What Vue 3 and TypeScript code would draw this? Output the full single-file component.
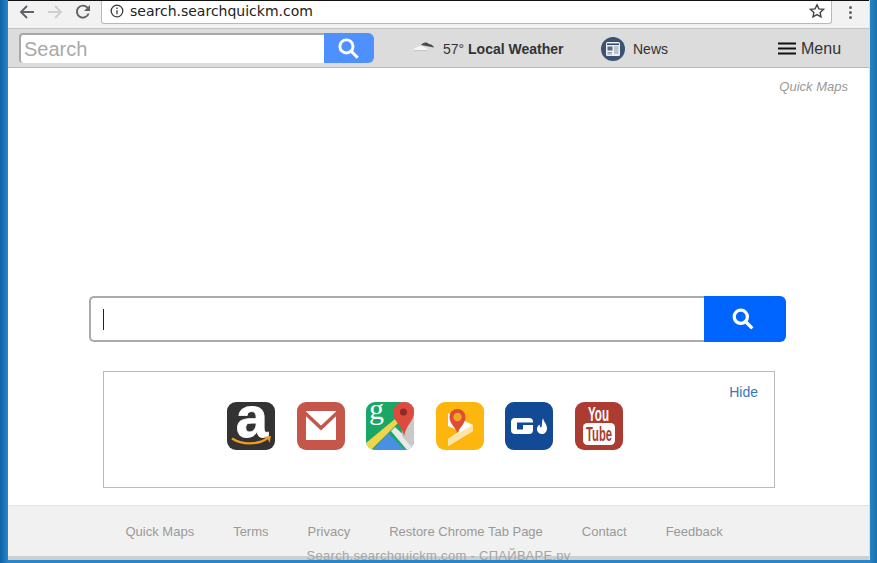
<script setup lang="ts">
const footerLinks = [
  "Quick Maps",
  "Terms",
  "Privacy",
  "Restore Chrome Tab Page",
  "Contact",
  "Feedback",
];
</script>

<template>
  <div class="desktop">
    <div class="window">
      <div class="chrome-bar">
        <svg class="nav back" viewBox="0 0 16 16">
          <path d="M15 8H2.5M8 2L2 8l6 6" />
        </svg>
        <svg class="nav forward" viewBox="0 0 16 16">
          <path d="M1 8h12.5M8 2l6 6-6 6" />
        </svg>
        <svg class="nav reload" viewBox="0 0 16 16">
          <path d="M13.6 9.5A6 6 0 1 1 12.4 3.6L14 5.2" />
          <path class="solid" d="M15 1v6H9z" />
        </svg>
        <div class="address">
          <svg class="info" viewBox="0 0 14 14">
            <circle cx="7" cy="7" r="5.8" />
            <path d="M7 6.2v4M7 3.6v1.5" />
          </svg>
          <span class="url">search.searchquickm.com</span>
          <svg class="star" viewBox="0 0 16 16">
            <path d="M8 1.8l1.9 4.1 4.5.5-3.3 3 .9 4.4L8 11.6l-4 2.2.9-4.4-3.3-3 4.5-.5z" />
          </svg>
        </div>
        <div class="kebab"><i></i><i></i><i></i></div>
      </div>

      <div class="top-bar">
        <div class="top-search">
          <input class="top-input" type="text" placeholder="Search" />
          <button class="top-button">
            <svg viewBox="0 0 20 20"><circle cx="8.2" cy="8.2" r="5.7" /><path d="M12.5 12.5L18 18" /></svg>
          </button>
        </div>
        <svg class="cloud" viewBox="0 0 22 12">
          <path fill="#4a4a4a" d="M8 4c2-3 6-3.500 8-1 2 0 4 1.500 5 3.500z" />
          <path fill="#f6f6f6" d="M1 9c0-2 2-3 4-3 2-1.500 5-1 6.500.5 2 0 3 1 3 2.500z" />
          <path fill="#c9c9c9" d="M1 9h14c-.5 1-1.500 1.200-2.500 1.200h-9C2 10.200 1 10 1 9z" />
        </svg>
        <span class="weather">57° <b>Local Weather</b></span>
        <svg class="news-icon" viewBox="0 0 24 24">
          <circle cx="12" cy="12" r="12" fill="#3b5273" />
          <rect x="5" y="5" width="14" height="14" rx="1.500" fill="#eef0f3" />
          <rect x="6" y="6.500" width="12" height="1.500" fill="#33455f" />
          <rect x="6.500" y="9.500" width="5" height="4" fill="#5a6a80" />
          <path stroke="#8a95a5" stroke-width="1" d="M13 10h4.500M13 12h4.500M13 14h4.500M6.500 15.500h4.500M6.500 17h4.500M13 16h4.500" />
        </svg>
        <span class="news">News</span>
        <svg class="burger" viewBox="0 0 18 13">
          <path d="M0 1.500h18M0 6.500h18M0 11.500h18" />
        </svg>
        <span class="menu">Menu</span>
      </div>

      <main class="content">
        <a class="quick-maps">Quick Maps</a>

        <div class="main-search">
          <div class="main-input"><span class="caret"></span></div>
          <button class="main-button">
            <svg viewBox="0 0 20 20"><circle cx="8" cy="8" r="6" /><path d="M12.500 12.500L18.500 18.500" /></svg>
          </button>
        </div>

        <section class="apps">
          <a class="hide">Hide</a>
          <div class="app-row">
            <svg class="app" viewBox="0 0 48 48">
              <rect width="48" height="48" rx="9" fill="#333" />
              <text class="amazon-a" x="25" y="35">a</text>
              <path fill="none" stroke="#f29a1f" stroke-width="2.400" d="M5 36.500c10 6.500 26 6.500 35 0" />
              <path fill="#f29a1f" d="M36 35l8-1-1.500 7-1.500-3.500z" />
            </svg>
            <svg class="app" viewBox="0 0 48 48">
              <rect width="48" height="48" rx="9" fill="#c5574a" />
              <rect x="9" y="9" width="30" height="29" fill="#fff" />
              <path fill="none" stroke="#c5574a" stroke-width="3.500" d="M7 10l17 16 17-16" />
            </svg>
            <svg class="app" viewBox="0 0 48 48">
              <defs>
                <clipPath id="maps-clip"><rect width="48" height="48" rx="9" /></clipPath>
              </defs>
              <g clip-path="url(#maps-clip)">
                <rect width="48" height="48" fill="#18a765" />
                <path fill="#4a90e2" d="M7 48l15-17 17 17z" />
                <path fill="#f3d34a" d="M0 41L29 17l3 4L5 48H0z" />
                <path fill="#e9e9e9" d="M25 29l4-4 19 18v5h-7z" />
                <path fill="#c9c9c9" d="M35 0h13v48L36 34z" />
                <path fill="#dc4b3e" d="M38 0c-7 0-11 5-11 11 0 7 8 11 11 23 3-12 10-16 10-23V0z" />
                <circle cx="37.500" cy="10" r="3.600" fill="#8e2a25" />
                <text class="maps-g" x="3" y="17">g</text>
              </g>
            </svg>
            <svg class="app" viewBox="0 0 48 48">
              <rect width="48" height="48" rx="9" fill="#fdb60d" />
              <path fill="#fff" d="M12 11l25 12v6L12 44v-7l12-8-12-5z" />
              <path fill="#fde3a6" d="M12 37l25-14v6L12 44z" />
              <path fill="#dd4b39" d="M21.500 31c-2-6-8-9-8-16a8 8 0 0 1 16 0c0 7-6 10-8 16z" />
              <circle cx="21.500" cy="15" r="4.200" fill="#f6a61e" />
            </svg>
            <svg class="app" viewBox="0 0 48 48">
              <rect width="48" height="48" rx="9" fill="#134a95" />
              <rect x="6" y="16" width="22" height="16" rx="4" fill="#fff" />
              <rect x="12" y="20.500" width="16" height="2.500" fill="#134a95" />
              <rect x="12" y="23" width="6" height="4.500" fill="#134a95" />
              <path fill="#fff" d="M38 16c.5 3.500 4 6 4 10.500 0 3.500-2.500 5.500-5 5.500-3 0-5-2.200-5-5 0-2.200 1.300-3.800 2.800-4.500-.2 1.500.3 2.800 1.400 3.300C37.500 23 36.500 19 38 16z" />
            </svg>
            <svg class="app" viewBox="0 0 48 48">
              <rect width="48" height="48" rx="9" fill="#ac3c31" />
              <rect x="8" y="21" width="32" height="22" rx="4.500" fill="#fff" />
              <text class="yt-you" x="13" y="19" textLength="21" lengthAdjust="spacingAndGlyphs">You</text>
              <text class="yt-tube" x="11" y="39" textLength="26" lengthAdjust="spacingAndGlyphs">Tube</text>
            </svg>
          </div>
        </section>
      </main>

      <footer class="footer">
        <nav class="footer-links">
          <a v-for="link in footerLinks" :key="link">{{ link }}</a>
        </nav>
        <div class="watermark">Search.searchquickm.com - СПАЙВАРЕ.ру</div>
      </footer>
    </div>
  </div>
</template>

<style>
html,
body {
  margin: 0;
  overflow: hidden;
}
</style>

<style scoped>
.desktop {
  width: 877px;
  height: 563px;
  padding-right: 8px;
  padding-left: 8px;
  box-sizing: border-box;
  overflow: hidden;
  background: linear-gradient(90deg, #0f62a8 0, #2a86c6 8px, #2a86c6 869px, #1a6fb0 877px);
  font-family: "Liberation Sans", Arial, sans-serif;
}

.window {
  display: flex;
  flex-direction: column;
  height: 560px;
  overflow: hidden;
  background: #fff;
  box-shadow: 1px 0 0 #ddd;
}

.chrome-bar {
  display: flex;
  align-items: flex-start;
  flex: none;
  height: 29px;
  box-sizing: border-box;
  background: #f2f2f2;
  border-top: 1px solid #111;
  border-bottom: 1px solid #c4c4c4;
}

.nav {
  flex: none;
  width: 16px;
  height: 16px;
  margin-top: 3px;
  fill: none;
  stroke: #5f6368;
  stroke-width: 1.900;
}

.back {
  margin-left: 11px;
}

.forward {
  margin-left: 12px;
  stroke: #cdd0d3;
}

.reload {
  margin-left: 12px;
}

.reload .solid {
  fill: #5f6368;
  stroke: none;
}

.address {
  display: flex;
  align-items: center;
  flex: none;
  width: 731px;
  height: 23px;
  margin-left: 10px;
  padding-bottom: 3px;
  box-sizing: border-box;
  background: #fff;
  border: 1px solid #b9b9b9;
  border-top: none;
  border-radius: 0 0 3px 3px;
}

.info {
  width: 14px;
  height: 14px;
  margin-left: 8px;
  fill: none;
  stroke: #3c3c3c;
  stroke-width: 1.300;
}

.url {
  flex: 1;
  margin-left: 6px;
  font-family: "DejaVu Sans", sans-serif;
  font-size: 14px;
  color: #222;
}

.star {
  width: 16px;
  height: 16px;
  margin-right: 6px;
  fill: none;
  stroke: #444;
  stroke-width: 1.400;
}

.kebab {
  display: flex;
  flex-direction: column;
  gap: 2px;
  margin-top: 5px;
  margin-left: 17px;
}

.kebab i {
  width: 3px;
  height: 3px;
  border-radius: 50%;
  background: #5f6368;
}

.top-bar {
  display: flex;
  align-items: center;
  flex: none;
  height: 39px;
  padding-left: 11px;
  box-sizing: border-box;
  background: #dcdcdc;
  border-bottom: 1px solid #b8b8b8;
  color: #333;
}

.top-search {
  display: flex;
  flex: none;
  width: 355px;
  height: 30px;
}

.top-input {
  flex: none;
  width: 305px;
  height: 30px;
  padding: 0 0 0 3px;
  box-sizing: border-box;
  background: #fff;
  border: none;
  border-top: 2px solid #a8a8a8;
  border-left: 2px solid #a8a8a8;
  border-radius: 4px 0 0 4px;
  font-family: inherit;
  font-size: 20px;
  outline: none;
}

.top-input::placeholder {
  color: #a9a9a9;
  opacity: 1;
}

.top-button {
  display: flex;
  align-items: center;
  justify-content: center;
  flex: none;
  width: 50px;
  height: 30px;
  padding: 0;
  background: #4d90fe;
  border: none;
  border-radius: 0 6px 6px 0;
}

.top-button svg {
  width: 23px;
  height: 23px;
  margin-left: -2px;
  fill: none;
  stroke: #fff;
  stroke-width: 2.600;
}

.cloud {
  flex: none;
  width: 22px;
  height: 12px;
  margin-left: 39px;
  margin-top: -2px;
}

.weather {
  flex: none;
  width: 158px;
  margin-left: 8px;
  margin-top: 2px;
  font-size: 14px;
}

.news-icon {
  flex: none;
  width: 24px;
  height: 24px;
  margin-top: 2px;
}

.news {
  flex: none;
  width: 145px;
  margin-left: 8px;
  margin-top: 2px;
  font-size: 14px;
}

.burger {
  flex: none;
  width: 18px;
  height: 13px;
  fill: none;
  stroke: #111;
  stroke-width: 2;
}

.menu {
  margin-left: 5px;
  margin-top: 2px;
  font-size: 16px;
}

.content {
  display: flex;
  flex: 1;
  flex-direction: column;
  min-height: 0;
}

.quick-maps {
  align-self: flex-end;
  margin-top: 11px;
  margin-right: 21px;
  font-size: 13px;
  font-style: italic;
  color: #999;
}

.main-search {
  display: flex;
  flex: none;
  width: 697px;
  height: 46px;
  margin-top: 202px;
  margin-left: 81px;
}

.main-input {
  display: flex;
  align-items: center;
  flex: 1;
  padding-left: 12px;
  background: #fff;
  border: 2px solid #aaa;
  border-right: none;
  border-radius: 5px 0 0 5px;
}

.caret {
  width: 1px;
  height: 21px;
  background: #222;
}

.main-button {
  display: flex;
  align-items: center;
  justify-content: center;
  flex: none;
  width: 82px;
  height: 46px;
  padding: 0;
  background: #0065ff;
  border: none;
  border-radius: 0 6px 6px 0;
}

.main-button svg {
  width: 22px;
  height: 22px;
  margin-left: -4px;
  fill: none;
  stroke: #fff;
  stroke-width: 3;
}

.apps {
  position: relative;
  flex: none;
  width: 672px;
  height: 117px;
  margin-top: 29px;
  margin-left: 95px;
  box-sizing: border-box;
  border: 1px solid #bbb;
}

.hide {
  position: absolute;
  top: 12px;
  right: 16px;
  font-size: 14px;
  color: #337ab7;
}

.app-row {
  display: flex;
  gap: 21.600px;
  margin-top: 30px;
  margin-left: 123px;
}

.app {
  flex: none;
  width: 48px;
  height: 48px;
}

.amazon-a {
  font-family: "Liberation Sans", Arial, sans-serif;
  font-size: 58px;
  font-weight: 700;
  text-anchor: middle;
  fill: #fff;
  stroke: #fff;
  stroke-width: 0.800px;
}

.maps-g {
  font-family: "Liberation Serif", serif;
  font-size: 30px;
  fill: #fff;
}

.yt-you {
  font-family: "Liberation Sans", Arial, sans-serif;
  font-size: 20px;
  font-weight: 700;
  fill: #fff;
}

.yt-tube {
  font-family: "Liberation Sans", Arial, sans-serif;
  font-size: 20px;
  font-weight: 700;
  fill: #ac3c31;
}

.footer {
  flex: none;
  height: 55px;
  box-sizing: border-box;
  padding-top: 18px;
  background: #f1f1f1;
  border-top: 1px solid #e4e4e4;
  border-bottom: 4px solid #cfcfcf;
  font-size: 13px;
  color: #999;
  text-align: center;
}

.footer-links {
  display: flex;
  gap: 39px;
  padding-left: 117.500px;
}

.watermark {
  margin-top: 9px;
  color: #a5a5a5;
  letter-spacing: 0.300px;
}
</style>
